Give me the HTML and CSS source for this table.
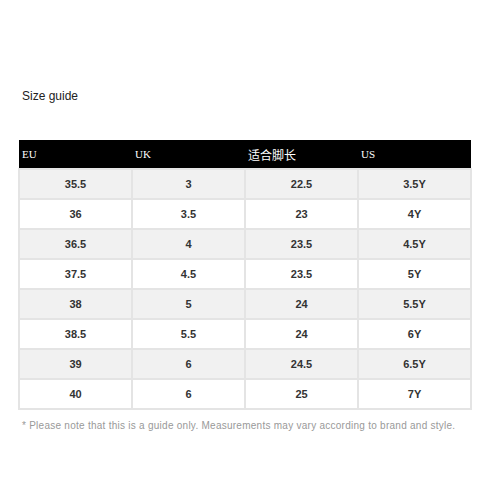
FILE: index.html
```html
<!DOCTYPE html>
<html>
<head>
<meta charset="utf-8">
<link rel="stylesheet" href="styles.css">
</head>
<body>
<div class="page">
  <h2 class="title">Size guide</h2>
  <table class="sizes">
    <thead>
      <tr><th>EU</th><th>UK</th><th class="cjk">适合脚长</th><th>US</th></tr>
    </thead>
    <tbody>
      <tr><td>35.5</td><td>3</td><td>22.5</td><td>3.5Y</td></tr>
      <tr><td>36</td><td>3.5</td><td>23</td><td>4Y</td></tr>
      <tr><td>36.5</td><td>4</td><td>23.5</td><td>4.5Y</td></tr>
      <tr><td>37.5</td><td>4.5</td><td>23.5</td><td>5Y</td></tr>
      <tr><td>38</td><td>5</td><td>24</td><td>5.5Y</td></tr>
      <tr><td>38.5</td><td>5.5</td><td>24</td><td>6Y</td></tr>
      <tr><td>39</td><td>6</td><td>24.5</td><td>6.5Y</td></tr>
      <tr><td>40</td><td>6</td><td>25</td><td>7Y</td></tr>
    </tbody>
  </table>
  <p class="note">* Please note that this is a guide only. Measurements may vary according to brand and style.</p>
</div>
</body>
</html>
```

FILE: styles.css
```css
html, body {
  margin: 0;
  padding: 0;
  background: #fff;
}
.page {
  padding: 88px 18px 0 18px;
  font-family: "Liberation Sans", Arial, sans-serif;
}
.title {
  margin: 0 0 0 4px;
  font-size: 12px;
  font-weight: normal;
  color: #222;
  line-height: 16px;
}
.sizes {
  margin-top: 36px;
  width: 454px;
  border-collapse: collapse;
  table-layout: fixed;
}
.sizes th {
  background: #000;
  color: #fff;
  height: 28px;
  padding: 0 0 0 3px;
  text-align: left;
  font-family: "Liberation Serif", "Noto Sans CJK SC", serif;
  font-size: 11px;
  font-weight: normal;
  border: 0;
}
.sizes th.cjk {
  font-family: "Noto Sans CJK SC", sans-serif;
  font-size: 12px;
}
.sizes td {
  height: 28px;
  padding: 0;
  border: 2px solid #e4e4e4;
  text-align: center;
  font-size: 11px;
  font-weight: bold;
  color: #333;
}
.sizes tbody tr:nth-child(odd) td {
  background: #f1f1f1;
}
.sizes tbody tr:nth-child(even) td {
  background: #fff;
}
.note {
  margin: 10px 0 0 4px;
  font-size: 10px;
  letter-spacing: 0.26px;
  color: #999;
  line-height: 12px;
}
```
